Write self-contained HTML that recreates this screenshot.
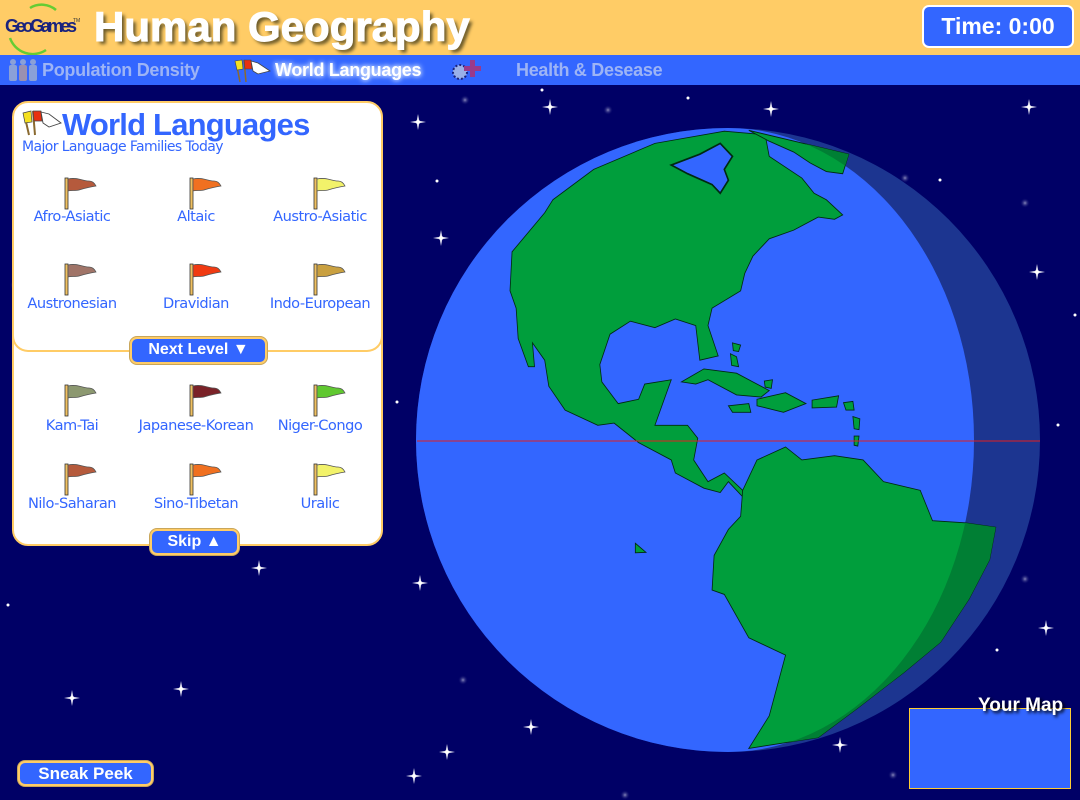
<!DOCTYPE html>
<html><head><meta charset="utf-8"><style>
*{margin:0;padding:0;box-sizing:border-box}
body{width:1080px;height:800px;overflow:hidden;background:#000066;font-family:"Liberation Sans",sans-serif;position:relative}
.abs{position:absolute}
#hdr{left:0;top:0;width:1080px;height:55px;background:#FFCC66}
#nav{left:0;top:55px;width:1080px;height:30px;background:#3366FF}
.nv{position:absolute;top:60px;font-weight:bold;font-size:18px;color:#9DB4F5;letter-spacing:-0.3px}
#title{left:94px;top:3px;font-size:42px;font-weight:bold;color:#fff;text-shadow:3px 3px 3px #6b5a2a;letter-spacing:0px;-webkit-text-stroke:1px #fff}
#time{left:922px;top:5px;width:152px;height:43px;background:#3366FF;border:2px solid #fff;border-radius:7px;color:#fff;font-weight:bold;font-size:23px;text-align:center;line-height:38px}
#panel{left:12px;top:101px;width:371px;height:445px;background:#fff;border:2px solid #FFCC66;border-radius:16px}
#div{left:12px;top:330px;width:371px;height:22px;border-bottom:2px solid #FFCC66;border-left:2px solid #FFCC66;border-right:2px solid #FFCC66;border-radius:0 0 16px 16px}
.lbl{position:absolute;width:124px;text-align:center;color:#3366FF;font-size:14.6px;font-family:"DejaVu Sans","Liberation Sans",sans-serif;letter-spacing:-0.5px}
.btn{position:absolute;background:#3366FF;border:2px solid #FFCC66;border-radius:7px;color:#fff;font-weight:bold;font-size:16px;text-align:center;line-height:22px;box-shadow:0 0 0 1px #c9a65a}
</style></head><body>
<div id="hdr" class="abs"></div>
<div id="nav" class="abs"></div>
<svg class="abs" style="left:0;top:0" width="90" height="55">
<path d="M30 8 A22 22 0 0 1 56 10" stroke="#66cc33" stroke-width="2.5" fill="none"/>
<path d="M10 38 A24 24 0 0 0 46 50" stroke="#66cc33" stroke-width="2.5" fill="none"/>
<text x="5" y="32" font-family="Liberation Sans" font-size="18" font-weight="bold" fill="#1a237e" letter-spacing="-2" textLength="70">GeoGames</text>
<text x="73" y="22" font-size="5" fill="#333">TM</text>
</svg>
<div id="title" class="abs">Human Geography</div>
<div id="time" class="abs">Time: 0:00</div>
<svg class="abs" style="left:6px;top:58px" width="34" height="24"><g fill="#8aa0d8"><circle cx="7" cy="4" r="3"/><rect x="3" y="7" width="8" height="16" rx="2"/><circle cx="17" cy="4" r="3"/><rect x="13" y="7" width="8" height="16" rx="2" fill="#9a90b0"/><circle cx="27" cy="4" r="3"/><rect x="23" y="7" width="8" height="16" rx="2"/></g></svg>
<div class="nv" style="left:42px">Population Density</div>
<svg class="abs" style="left:232px;top:57px" width="42" height="26"><line x1="4" y1="4" x2="8" y2="25" stroke="#8a6a30" stroke-width="1.5"/><path d="M3 4 L10 3 L11 12 L5 13Z" fill="#f5e020" stroke="#444" stroke-width=".6"/><line x1="12" y1="3" x2="14" y2="25" stroke="#8a6a30" stroke-width="1.5"/><path d="M12 3 L19 3 L20 12 L13 12Z" fill="#e83010" stroke="#444" stroke-width=".6"/><path d="M19 4 L26 6 L38 14 L26 17 L21 14Z" fill="#fff" stroke="#444" stroke-width=".8"/></svg>
<div class="nv" style="left:275px;color:#fff;text-shadow:0 0 6px #cfe0ff,0 0 4px #cfe0ff">World Languages</div>
<svg class="abs" style="left:446px;top:57px" width="40" height="26"><circle cx="14" cy="15" r="7" fill="#9ab0e8" stroke="#1a237e" stroke-width="2" stroke-dasharray="2 2"/><rect x="24" y="3" width="5" height="17" fill="#9a3a8a"/><rect x="18" y="9" width="17" height="5" fill="#9a3a8a"/></svg>
<div class="nv" style="left:516px">Health &amp; Desease</div>

<svg class="abs" style="left:0;top:85px" width="1080" height="715">
<defs><g id="st"><path d="M0 -8 L1.3 -1.3 L8 0 L1.3 1.3 L0 8 L-1.3 1.3 L-8 0 L-1.3 -1.3Z" fill="#dde"/><circle r="2" fill="#fff"/></g><radialGradient id="bl"><stop offset="0" stop-color="#8888bb"/><stop offset="1" stop-color="#000066" stop-opacity="0"/></radialGradient></defs>
<g>
<use href="#st" x="418" y="37"/><use href="#st" x="550" y="22"/><use href="#st" x="771" y="24"/><use href="#st" x="1029" y="22"/><use href="#st" x="441" y="153"/><use href="#st" x="1037" y="187"/><use href="#st" x="259" y="483"/><use href="#st" x="420" y="498"/><use href="#st" x="1046" y="543"/><use href="#st" x="181" y="604"/><use href="#st" x="72" y="613"/><use href="#st" x="531" y="642"/><use href="#st" x="447" y="667"/><use href="#st" x="840" y="660"/><use href="#st" x="414" y="691"/>
<circle cx="542" cy="5" r="1.5" fill="#fff"/><circle cx="437" cy="96" r="1.5" fill="#fff"/><circle cx="397" cy="317" r="1.5" fill="#fff"/><circle cx="688" cy="13" r="1.5" fill="#fff"/><circle cx="1020" cy="400" r="1.5" fill="#fff"/><circle cx="997" cy="565" r="1.5" fill="#fff"/><circle cx="8" cy="520" r="1.5" fill="#fff"/><circle cx="1075" cy="230" r="1.5" fill="#fff"/><circle cx="940" cy="95" r="1.5" fill="#fff"/><circle cx="1058" cy="340" r="1.5" fill="#fff"/>
<circle cx="465" cy="15" r="5" fill="url(#bl)"/><circle cx="608" cy="25" r="5" fill="url(#bl)"/><circle cx="905" cy="93" r="5" fill="url(#bl)"/><circle cx="1025" cy="118" r="5" fill="url(#bl)"/><circle cx="1025" cy="494" r="5" fill="url(#bl)"/><circle cx="463" cy="595" r="5" fill="url(#bl)"/><circle cx="952" cy="640" r="5" fill="url(#bl)"/><circle cx="625" cy="710" r="5" fill="url(#bl)"/><circle cx="893" cy="690" r="5" fill="url(#bl)"/><circle cx="15" cy="200" r="5" fill="url(#bl)"/>
</g></svg>

<svg class="abs" style="left:0;top:0" width="1080" height="800">
<defs>
<clipPath id="dk"><path d="M728 128 A312 312 0 0 1 728 752 A246 312 0 0 0 728 128Z"/></clipPath>
<clipPath id="gl"><circle cx="728" cy="440" r="312"/></clipPath>
<g id="land">
<path d="M350 230 L450 160 L600 100 L770 72 L870 80 L880 130 L960 180 L990 215 L1020 230 L1060 265 L1040 275 L1000 270 L940 300 L880 320 L840 360 L820 400 L810 440 L740 480 L730 520 L755 590 L710 600 L700 520 L650 505 L600 525 L540 510 L490 540 L465 610 L470 650 L510 700 L560 690 L575 655 L640 645 L600 750 L680 750 L705 780 L695 830 L730 880 L770 860 L815 900 L815 915 L780 880 L760 905 L720 895 L650 860 L640 830 L560 790 L500 745 L460 750 L380 715 L340 660 L330 600 L300 560 L305 615 L290 615 L265 550 L260 480 L245 440 L250 350 L330 260Z"/>
<path d="M830 70 L1075 125 L1060 170 L1020 165 L980 145 L940 120 L880 95Z"/>
<path d="M850 830 L920 800 L960 830 L1040 820 L1110 830 L1160 880 L1250 900 L1280 970 L1360 975 L1435 985 L1420 1060 L1370 1150 L1300 1250 L1210 1320 L1100 1400 L1000 1470 L830 1495 L880 1420 L920 1280 L830 1240 L770 1140 L740 1130 L745 1050 L780 990 L810 960 L815 900Z"/>
<path d="M665 650 L720 620 L800 630 L880 670 L860 685 L800 680 L730 645 L700 655Z"/>
<path d="M850 690 L920 675 L970 700 L915 720 L850 705Z"/>
<path d="M780 705 L830 700 L835 720 L790 720Z"/>
<path d="M985 692 L1050 682 L1045 708 L985 710Z"/>
<path d="M1062 698 L1085 695 L1088 715 L1068 715Z"/>
<path d="M1085 730 L1102 735 L1100 760 L1088 758Z"/>
<path d="M1088 775 L1100 775 L1097 798 L1088 796Z"/>
<path d="M790 560 L810 565 L805 580 L792 578Z"/>
<path d="M785 585 L800 592 L805 615 L788 612Z"/>
<path d="M868 648 L888 645 L885 665 L870 662Z"/>
<path d="M552 1022 L578 1043 L552 1044Z"/>
</g>
</defs>
<circle cx="728" cy="440" r="312" fill="#1C3590"/>
<path d="M728 128 A312 312 0 0 0 728 752 A246 312 0 0 0 728 128Z" fill="#3366FF"/>
<g clip-path="url(#gl)">
<g transform="translate(410,100) scale(0.4082,0.4337)" fill="#009E3C" stroke="#002a10" stroke-width="2" vector-effect="non-scaling-stroke">
<use href="#land"/>
</g>
<g clip-path="url(#dk)"><g transform="translate(410,100) scale(0.4082,0.4337)" fill="#007F34"><use href="#land"/></g></g>
<g transform="translate(410,100) scale(0.4082,0.4337)" fill="#3366FF" stroke="#002a10" stroke-width="4">
<path d="M640 150 L710 125 L760 100 L790 130 L770 160 L780 185 L760 215 L740 195 L680 170Z"/>
</g>
</g>
<line x1="417" y1="441" x2="1040" y2="441" stroke="#e02020" stroke-width="1"/>
</svg>

<div id="panel" class="abs"></div>
<div id="div" class="abs"></div>
<svg class="abs" style="left:20px;top:108px" width="44" height="28"><line x1="4" y1="5" x2="9" y2="27" stroke="#8a6a30" stroke-width="2"/><path d="M3 5 L11 3 L12 14 L5 15Z" fill="#f5e020" stroke="#444" stroke-width=".7"/><line x1="13" y1="3" x2="15" y2="27" stroke="#8a6a30" stroke-width="2"/><path d="M13 3 L21 3 L22 13 L14 13Z" fill="#e83010" stroke="#444" stroke-width=".7"/><path d="M21 4 L29 6 L41 15 L29 19 L23 15Z" fill="#fff" stroke="#444" stroke-width=".9"/></svg>
<div class="abs" style="left:62px;top:107px;font-size:31px;font-weight:bold;color:#3366FF;letter-spacing:-0.8px">World Languages</div>
<div class="abs" style="left:22px;top:139px;font-size:14px;color:#3366FF;font-family:'DejaVu Sans',sans-serif;letter-spacing:-0.6px">Major Language Families Today</div>

<svg class="abs" style="left:0;top:0" width="400" height="560">
<defs><g id="fl"><rect x="0" y="0" width="3" height="31" fill="#f0c060" stroke="#333" stroke-width=".8"/><path d="M3 1 C12 -1 18 3 24 3 C28 3 30 6 31 8 C25 9 20 10 14 12 C10 13 6 12 3 13Z" stroke="#555" stroke-width=".8"/></g></defs>
<use href="#fl" x="65" y="178" fill="#B55A3C"/><use href="#fl" x="190" y="178" fill="#F07020"/><use href="#fl" x="314" y="178" fill="#F2F26A"/>
<use href="#fl" x="65" y="264" fill="#A07468"/><use href="#fl" x="190" y="264" fill="#F03A12"/><use href="#fl" x="314" y="264" fill="#C9A040"/>
<use href="#fl" x="65" y="385" fill="#8C9870"/><use href="#fl" x="190" y="385" fill="#7A2228"/><use href="#fl" x="314" y="385" fill="#60C830"/>
<use href="#fl" x="65" y="464" fill="#B55A3C"/><use href="#fl" x="190" y="464" fill="#F07020"/><use href="#fl" x="314" y="464" fill="#F2F26A"/>
</svg>
<div class="lbl" style="left:10px;top:208px">Afro-Asiatic</div>
<div class="lbl" style="left:134px;top:208px">Altaic</div>
<div class="lbl" style="left:258px;top:208px">Austro-Asiatic</div>
<div class="lbl" style="left:10px;top:295px">Austronesian</div>
<div class="lbl" style="left:134px;top:295px">Dravidian</div>
<div class="lbl" style="left:258px;top:295px">Indo-European</div>
<div class="lbl" style="left:10px;top:417px">Kam-Tai</div>
<div class="lbl" style="left:134px;top:417px">Japanese-Korean</div>
<div class="lbl" style="left:258px;top:417px">Niger-Congo</div>
<div class="lbl" style="left:10px;top:495px">Nilo-Saharan</div>
<div class="lbl" style="left:134px;top:495px">Sino-Tibetan</div>
<div class="lbl" style="left:258px;top:495px">Uralic</div>

<div class="btn" style="left:130px;top:337px;width:137px;height:27px">Next Level ▼</div>
<div class="btn" style="left:150px;top:529px;width:89px;height:26px">Skip ▲</div>
<div class="btn" style="left:18px;top:761px;width:135px;height:25px;font-size:17px">Sneak Peek</div>

<div class="abs" style="left:909px;top:708px;width:162px;height:81px;background:#3366FF;border:1px solid #FFCC33"></div>
<div class="abs" style="left:978px;top:695px;color:#fff;font-weight:bold;font-size:19px;text-shadow:2px 2px 3px #000">Your Map</div>
</body></html>
